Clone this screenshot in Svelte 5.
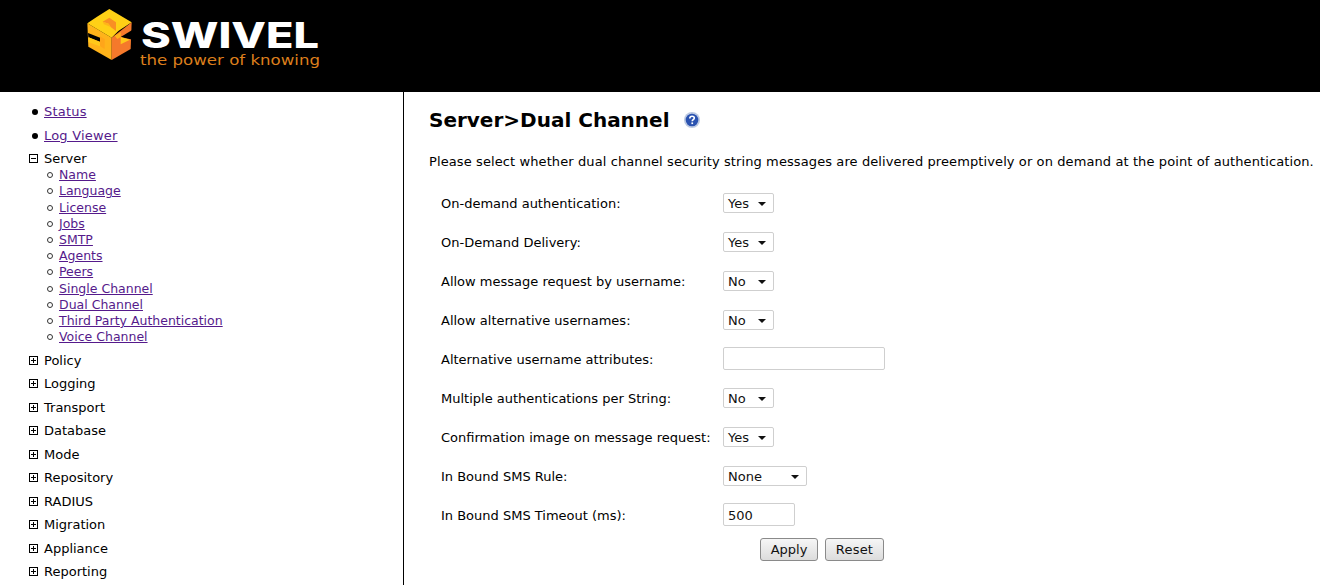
<script lang="ts">
  const topLinks = ['Status', 'Log Viewer'];
  const serverLinks = ['Name', 'Language', 'License', 'Jobs', 'SMTP', 'Agents', 'Peers', 'Single Channel', 'Dual Channel', 'Third Party Authentication', 'Voice Channel'];
  const collapsed = ['Policy', 'Logging', 'Transport', 'Database', 'Mode', 'Repository', 'RADIUS', 'Migration', 'Appliance', 'Reporting'];

  type Field = { label: string; kind: 'select' | 'text'; value: string; size: string };
  const fields: Field[] = [
    { label: 'On-demand authentication:', kind: 'select', value: 'Yes', size: 'small' },
    { label: 'On-Demand Delivery:', kind: 'select', value: 'Yes', size: 'small' },
    { label: 'Allow message request by username:', kind: 'select', value: 'No', size: 'small' },
    { label: 'Allow alternative usernames:', kind: 'select', value: 'No', size: 'small' },
    { label: 'Alternative username attributes:', kind: 'text', value: '', size: 'wide' },
    { label: 'Multiple authentications per String:', kind: 'select', value: 'No', size: 'small' },
    { label: 'Confirmation image on message request:', kind: 'select', value: 'Yes', size: 'small' },
    { label: 'In Bound SMS Rule:', kind: 'select', value: 'None', size: 'medium' },
    { label: 'In Bound SMS Timeout (ms):', kind: 'text', value: '500', size: 'short' }
  ];
</script>

<div class="page">
  <header class="banner">
    <svg class="logo" width="240" height="70" viewBox="0 0 240 70" aria-label="Swivel">
      <g transform="translate(-5,2) scale(0.3333)">
        <!-- left faces -->
        <polygon points="22,55 95,98 95,165 25,125" fill="#ffb31a" />
        <!-- right faces -->
        <polygon points="95,98 155,52 152,132 95,165" fill="#f5792b" />
        <!-- top face -->
        <polygon points="88,12 155,52 115,78 95,98 22,55 50,36" fill="#ffd016" />
        <!-- notch on top -->
        <polygon points="68,50 88,38 108,52 108,78 92,66 86,56" fill="#f98f24" />
        <polygon points="68,50 86,56 92,66 72,58" fill="#ffb31a" />
        <!-- left slit, lighter lip below it -->
        <polygon points="24,84 64,100 70,114 25,97" fill="#000" />
        <polygon points="26,97 72,116 72,128 26,112" fill="#ffc81a" />
        <polygon points="60,94 74,102 74,132 60,124" fill="#ffa51a" />
        <!-- right wedge -->
        <polygon points="122,96 158,74 158,104" fill="#000" />
        <polygon points="104,92 122,82 122,96 112,102" fill="#ffb31a" />
        <polygon points="122,96 150,104 122,118" fill="#ffc81a" />
      </g>
      <text x="56" y="45" class="brand" textLength="178" lengthAdjust="spacingAndGlyphs">SWIVEL</text>
      <text x="55" y="62" class="tagline" textLength="180" lengthAdjust="spacingAndGlyphs">the power of knowing</text>
    </svg>
  </header>

  <div class="body">
    <nav class="side">
      <ul class="top">
        {#each topLinks as link}
          <li><a href="#top">{link}</a></li>
        {/each}
      </ul>
      <div class="branch open">
        <span class="box minus"></span>Server
      </div>
      <ul class="sub">
        {#each serverLinks as link}
          <li><a href="#top">{link}</a></li>
        {/each}
      </ul>
      {#each collapsed as item}
        <div class="branch">
          <span class="box plus"></span>{item}
        </div>
      {/each}
    </nav>

    <main class="content">
      <h1>Server&gt;Dual Channel
        <svg class="help" width="16" height="16" viewBox="0 0 16 16" aria-hidden="true">
          <circle cx="8" cy="8" r="8" fill="#bcc9e2" />
          <circle cx="8" cy="8" r="6.3" fill="#2a52b0" />
          <path d="M5.8 6.4c0-1.5 1.1-2.2 2.3-2.2s2.2.7 2.2 1.9c0 1.6-2.1 1.6-2.1 3.2" fill="none" stroke="#fff" stroke-width="1.6" />
          <rect x="7.4" y="10.4" width="1.7" height="1.7" fill="#fff" />
        </svg>
      </h1>
      <p class="intro">Please select whether dual channel security string messages are delivered preemptively or on demand at the point of authentication.</p>

      <div class="form">
        {#each fields as f}
          <div class="row">
            <span class="label">{f.label}</span>
            {#if f.kind === 'select'}
              <span class="select {f.size}">{f.value}<i class="caret"></i></span>
            {:else}
              <span class="input {f.size}">{f.value}</span>
            {/if}
          </div>
        {/each}
      </div>
      <div class="actions">
        <button type="button">Apply</button>
        <button type="button" class="reset">Reset</button>
      </div>
    </main>
  </div>
</div>

<style>
  :global(body) {
    margin: 0;
    background: #fff;
    overflow: hidden;
  }
  .page {
    width: 1320px;
    height: 585px;
    overflow: hidden;
    font-family: "DejaVu Sans", Verdana, sans-serif;
    font-size: 13px;
    color: #000;
  }
  .banner {
    height: 92px;
    background: #000;
    padding-left: 85px;
    box-sizing: border-box;
    padding-top: 3px;
  }
  .logo {
    display: block;
  }
  .brand {
    font-family: Inter, sans-serif;
    font-weight: 800;
    font-size: 35px;
    fill: #fff;
  }
  .tagline {
    font-family: "DejaVu Sans", sans-serif;
    font-size: 14px;
    fill: #dc7f1c;
  }
  .body {
    display: flex;
    height: 493px;
  }
  .side {
    flex: none;
    width: 404px;
    box-sizing: border-box;
    border-right: 1px solid #000;
    padding-top: 11px;
    padding-left: 29px;
    overflow: hidden;
  }
  a {
    color: #551a8b;
  }
  ul {
    margin: 0;
    padding: 0;
    list-style: none;
  }
  .top li {
    height: 23.6px;
    line-height: 18px;
    padding-left: 15px;
    position: relative;
    letter-spacing: 0.2px;
  }
  .top li::before {
    content: '';
    position: absolute;
    left: 3px;
    top: 6px;
    width: 6px;
    height: 6px;
    border-radius: 50%;
    background: #000;
  }
  .branch {
    height: 23.5px;
    line-height: 18px;
    display: flex;
    align-items: flex-start;
  }
  .branch.open {
    height: 17px;
  }
  .box {
    width: 7px;
    height: 7px;
    border: 1px solid #000;
    margin: 4px 6px 0 0;
    flex: none;
    background:
      linear-gradient(#000, #000) center / 5px 1px no-repeat;
  }
  .box.plus {
    background:
      linear-gradient(#000, #000) center / 5px 1px no-repeat,
      linear-gradient(#000, #000) center / 1px 5px no-repeat;
  }
  .sub {
    padding-left: 30px;
    margin-bottom: 6.4px;
    font-size: 12.5px;
  }
  .sub li {
    height: 16.2px;
    line-height: 16px;
    position: relative;
  }
  .sub li::before {
    content: '';
    position: absolute;
    left: -12px;
    top: 5px;
    width: 4px;
    height: 4px;
    border: 1px solid #333;
    border-radius: 50%;
  }
  .content {
    padding: 15px 0 0 25px;
    flex: 1;
    min-width: 0;
  }
  h1 {
    margin: 0;
    font-size: 20px;
    font-weight: bold;
    line-height: 26px;
    white-space: nowrap;
  }
  .help {
    vertical-align: -1px;
    margin-left: 8px;
  }
  .intro {
    margin: 21px 0 0;
    line-height: 16px;
    white-space: nowrap;
    letter-spacing: 0.1px;
  }
  .form {
    margin-top: 14px;
    padding-left: 12px;
  }
  .row {
    display: flex;
    align-items: center;
    height: 39px;
  }
  .label {
    width: 282px;
    flex: none;
  }
  .select, .input {
    display: inline-block;
    box-sizing: border-box;
    background: #fff;
    border: 1px solid #cfcfcf;
    border-radius: 2px;
    position: relative;
    color: #111;
    margin-bottom: 2px;
  }
  .select {
    height: 20px;
    line-height: 20px;
    padding-left: 4px;
  }
  .small { width: 51px; }
  .medium { width: 84px; }
  .wide { width: 162px; height: 23px; }
  .short { width: 72px; height: 23px; line-height: 23px; padding-left: 4px; }
  .caret {
    position: absolute;
    right: 7px;
    top: 8px;
    border-left: 4px solid transparent;
    border-right: 4px solid transparent;
    border-top: 4px solid #111;
  }
  .actions {
    display: flex;
    gap: 7px;
    padding-left: 331px;
    margin-top: 3px;
  }
  button {
    font: inherit;
    font-size: 13px;
    height: 23px;
    width: 58px;
    padding: 0;
    border: 1px solid #8a8a8a;
    border-radius: 3px;
    background: linear-gradient(#f6f6f6, #dcdcdc);
    color: #111;
  }
  .reset {
    width: 59px;
    letter-spacing: 0.2px;
  }
</style>
